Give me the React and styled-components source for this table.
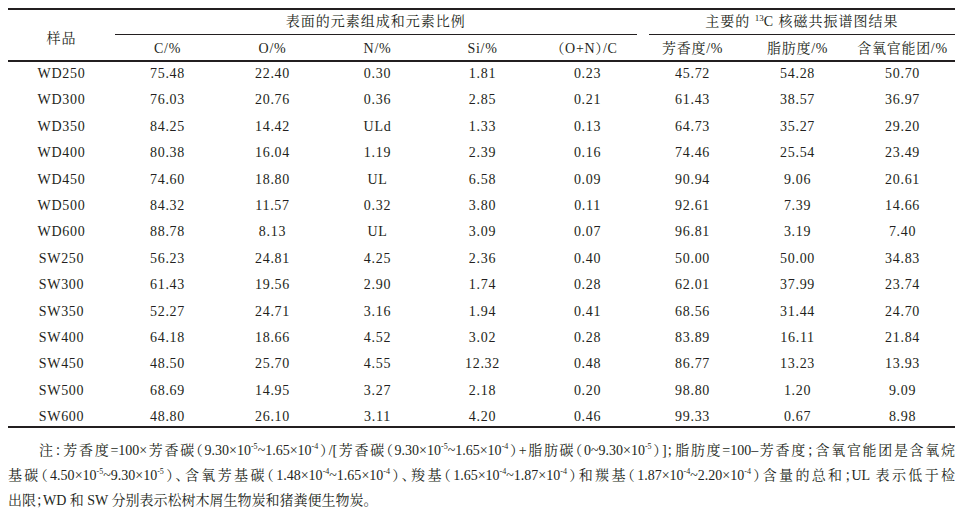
import React from 'react'
import styled, { createGlobalStyle } from 'styled-components';

const ink = '#231f20';
const serif = `"Liberation Serif", "Noto Serif CJK SC", "Noto Sans CJK SC", serif`;

const rows = [
  ['WD250', '75.48', '22.40', '0.30', '1.81', '0.23', '45.72', '54.28', '50.70'],
  ['WD300', '76.03', '20.76', '0.36', '2.85', '0.21', '61.43', '38.57', '36.97'],
  ['WD350', '84.25', '14.42', 'ULd', '1.33', '0.13', '64.73', '35.27', '29.20'],
  ['WD400', '80.38', '16.04', '1.19', '2.39', '0.16', '74.46', '25.54', '23.49'],
  ['WD450', '74.60', '18.80', 'UL', '6.58', '0.09', '90.94', '9.06', '20.61'],
  ['WD500', '84.32', '11.57', '0.32', '3.80', '0.11', '92.61', '7.39', '14.66'],
  ['WD600', '88.78', '8.13', 'UL', '3.09', '0.07', '96.81', '3.19', '7.40'],
  ['SW250', '56.23', '24.81', '4.25', '2.36', '0.40', '50.00', '50.00', '34.83'],
  ['SW300', '61.43', '19.56', '2.90', '1.74', '0.28', '62.01', '37.99', '23.74'],
  ['SW350', '52.27', '24.71', '3.16', '1.94', '0.41', '68.56', '31.44', '24.70'],
  ['SW400', '64.18', '18.66', '4.52', '3.02', '0.28', '83.89', '16.11', '21.84'],
  ['SW450', '48.50', '25.70', '4.55', '12.32', '0.48', '86.77', '13.23', '13.93'],
  ['SW500', '68.69', '14.95', '3.27', '2.18', '0.20', '98.80', '1.20', '9.09'],
  ['SW600', '48.80', '26.10', '3.11', '4.20', '0.46', '99.33', '0.67', '8.98'],
]

const subHeads = ['C/%', 'O/%', 'N/%', 'Si/%', '（O+N）/C', '芳香度/%', '脂肪度/%', '含氧官能团/%']

const GlobalStyle = createGlobalStyle`
  body{
    margin: 8px;
    background: #fff;
    color: ${ink};
    font-family: ${serif};
    font-feature-settings: "halt";
  }
`

// 10^exp with a small raised exponent
const Pow = ({ exp }) => (
  <>×10<Sup>{exp}</Sup></>
)

const App = () => {
  return (
    <Page>
      <GlobalStyle />
      <DataTable>
        <colgroup>
          <col style={{ width: 107 }} />
          {subHeads.map((h) => <col key={h} style={{ width: 105 }} />)}
        </colgroup>
        <thead>
          <tr>
            <SampleHead rowSpan={2}>样品</SampleHead>
            <GroupCell colSpan={5}>
              <GroupTitle $right={3.5}>表面的元素组成和元素比例</GroupTitle>
            </GroupCell>
            <GroupCell colSpan={3}>
              <GroupTitle $left={8.5}>主要的 <Sup $big>13</Sup>C 核磁共振谱图结果</GroupTitle>
            </GroupCell>
          </tr>
          <tr>
            {subHeads.map((h) => <SubHead key={h}>{h}</SubHead>)}
          </tr>
        </thead>
        <tbody>
          {rows.map((r) => (
            <Row key={r[0]}>
              {r.map((v, i) => <Cell key={i}>{v}</Cell>)}
            </Row>
          ))}
        </tbody>
      </DataTable>
      <Note>
        <NoteLine $indent>
          注：芳香度=100×芳香碳（9.30<Pow exp="-5" />~1.65<Pow exp="-4" />）/[芳香碳（9.30<Pow exp="-5" />~1.65<Pow exp="-4" />）+脂肪碳（0~9.30<Pow exp="-5" />）]；脂肪度=100–芳香度；含氧官能团是含氧烷
        </NoteLine>
        <NoteLine>
          基碳（4.50<Pow exp="-5" />~9.30<Pow exp="-5" />）、含氧芳基碳（1.48<Pow exp="-4" />~1.65<Pow exp="-4" />）、羧基（1.65<Pow exp="-4" />~1.87<Pow exp="-4" />）和羰基（1.87<Pow exp="-4" />~2.20<Pow exp="-4" />）含量的总和；UL 表示低于检
        </NoteLine>
        <NoteLine $last>
          出限；WD 和 SW 分别表示松树木屑生物炭和猪粪便生物炭。
        </NoteLine>
      </Note>
    </Page>
  )
}

export default App;

const Page = styled.div`
    width: 947px;
`

const DataTable = styled.table`
    width: 947px;
    table-layout: fixed;
    border-collapse: separate;
    border-spacing: 0;
    border-top: 2.5px solid ${ink};
    font-size: 14px;
    color: ${ink};
`

const SampleHead = styled.th`
    padding: 4px 0 0;
    font-weight: normal;
    font-size: 14px;
    letter-spacing: 1px;
    vertical-align: middle;
    text-align: center;
    border-bottom: 2px solid ${ink};
`

const GroupCell = styled.th`
    padding: 0;
    font-weight: normal;
`

const GroupTitle = styled.div`
    margin-left: ${(p) => p.$left || 0}px;
    margin-right: ${(p) => p.$right || 0}px;
    height: 24px;
    line-height: 24px;
    text-align: center;
    letter-spacing: 1px;
    border-bottom: 1.5px solid ${ink};
`

const SubHead = styled.th`
    padding: 2px 0 0;
    height: 23px;
    line-height: 23px;
    font-weight: normal;
    text-align: center;
    letter-spacing: 0.7px;
    border-bottom: 2px solid ${ink};
`

const Row = styled.tr`
    &:last-child td{
        padding-bottom: 1px;
        border-bottom: 2px solid ${ink};
    }
`

const Cell = styled.td`
    padding: 4px 0 6.4px;
    line-height: 16px;
    text-align: center;
    letter-spacing: 0.7px;
`

const Sup = styled.sup`
    font-size: ${(p) => (p.$big ? 9 : 8)}px;
    line-height: 0;
    vertical-align: ${(p) => (p.$big ? 5 : 6)}px;
    letter-spacing: 0;
`

const Note = styled.div`
    margin-top: 10px;
    font-size: 14px;
    line-height: 25px;
    color: ${ink};
`

const NoteLine = styled.div`
    padding-left: ${(p) => (p.$indent ? 31 : 0)}px;
    white-space: nowrap;
    text-align: ${(p) => (p.$last ? 'left' : 'justify')};
    text-align-last: ${(p) => (p.$last ? 'left' : 'justify')};
`
